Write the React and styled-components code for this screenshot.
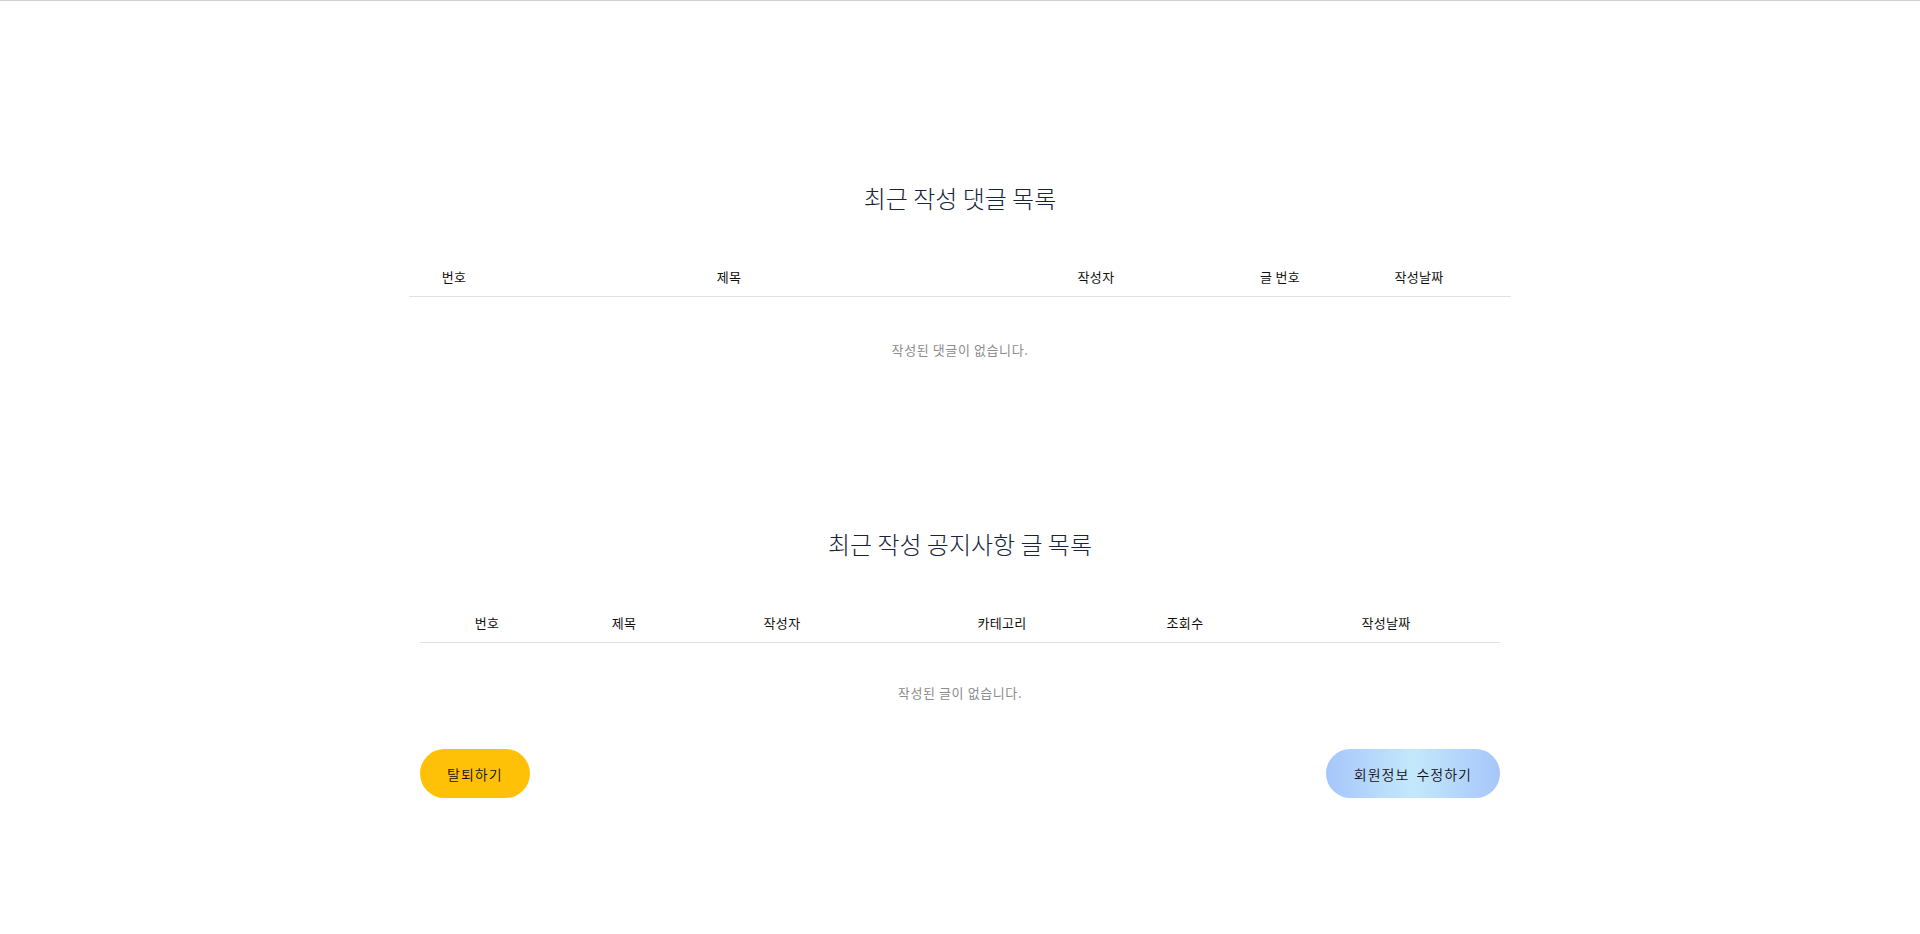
import React from 'react'
import styled, { createGlobalStyle } from 'styled-components'

const GlobalStyle = createGlobalStyle`
  body {
    margin: 0;
    background: #fff;
    font-family: 'Noto Sans CJK KR', 'Noto Sans', sans-serif;
  }
`;

const TopLine = styled.div`
  height: 1px;
  background-color: #cfcfcf;
`;

const Page = styled.main`
  display: flex;
  flex-direction: column;
  align-items: center;
  padding-top: 179px;
  padding-bottom: 120px;
`;

const Section = styled.section`
  width: ${props => props.width}px;
  display: flex;
  flex-direction: column;
  margin-bottom: ${props => props.gap || 0}px;
`;

const Title = styled.h2`
  margin: 0;
  font-size: 24px;
  line-height: 36px;
  font-weight: 300;
  color: #18243a;
  text-align: center;
`;

const HeaderRow = styled.div`
  margin-top: 40px;
  display: grid;
  grid-template-columns: ${props => props.cols};
  height: 40px;
  align-items: center;
  border-bottom: 1px solid #e2e2e2;
`;

const HeadCell = styled.div`
  text-align: center;
  font-size: 13px;
  letter-spacing: 0.3px;
  color: #111;
  padding-left: ${props => props.shift || 0}px;
`;

const Empty = styled.div`
  padding: ${props => props.pad}px 0;
  text-align: center;
  font-size: 13px;
  letter-spacing: 0.6px;
  line-height: 18px;
  color: #8c8c8c;
`;

const ButtonRow = styled.div`
  display: flex;
  justify-content: space-between;
  margin-top: 6px;
`;

const Button = styled.button`
  height: 49px;
  border: none;
  border-radius: 25px;
  padding: 0 ${props => props.px}px;
  font-family: inherit;
  font-size: 14px;
  font-weight: 350;
  letter-spacing: 1px;
  word-spacing: 3px;
  color: #111;
  cursor: pointer;
  background: ${props => props.bg};
`;

const commentCols = ['번호', '제목', '작성자', '글 번호', '작성날짜'];
const noticeCols = ['번호', '제목', '작성자', '카테고리', '조회수', '작성날짜'];

const App = () => {
  return (
    <>
      <GlobalStyle />
      <TopLine />
      <Page>
        <Section width={1102} gap={123}>
          <Title>최근 작성 댓글 목록</Title>
          <HeaderRow cols="90px 460px 274px 94px 1fr">
            {commentCols.map(c => <HeadCell key={c}>{c}</HeadCell>)}
          </HeaderRow>
          <Empty pad={44}>작성된 댓글이 없습니다.</Empty>
        </Section>
        <Section width={1080}>
          <Title>최근 작성 공지사항 글 목록</Title>
          <HeaderRow cols="134px 140px 176px 264px 102px 1fr">
            {noticeCols.map((c, i) => (
              <HeadCell key={c} shift={i === 5 ? 36 : 0}>{c}</HeadCell>
            ))}
          </HeaderRow>
          <Empty pad={41}>작성된 글이 없습니다.</Empty>
          <ButtonRow>
            <Button px={27} bg="#ffc107">탈퇴하기</Button>
            <Button px={28} bg="linear-gradient(to right, #a6c6fb, #c4e8fb, #a6c6fb)">회원정보 수정하기</Button>
          </ButtonRow>
        </Section>
      </Page>
    </>
  )
}

export default App
